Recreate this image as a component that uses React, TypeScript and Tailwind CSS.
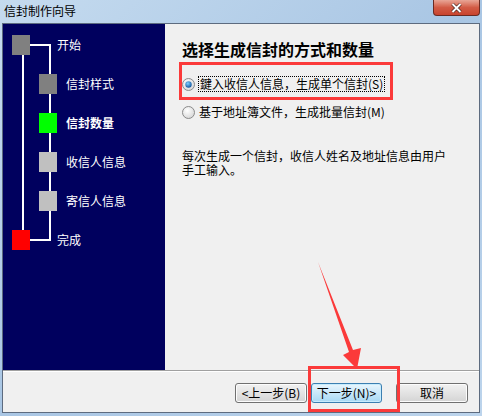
import React from "react";

const font = "font-['Noto_Sans_CJK_SC','Noto_Sans',sans-serif]";

type Step = { label: string; color: string; indent: boolean; bold?: boolean };

const steps: Step[] = [
  { label: "开始", color: "bg-[#808080]", indent: false },
  { label: "信封样式", color: "bg-[#808080]", indent: true },
  { label: "信封数量", color: "bg-[#00ff00]", indent: true, bold: true },
  { label: "收信人信息", color: "bg-[#c0c0c0]", indent: true },
  { label: "寄信人信息", color: "bg-[#c0c0c0]", indent: true },
  { label: "完成", color: "bg-[#ff0000]", indent: false },
];

function Radio({ checked }: { checked?: boolean }) {
  return (
    <svg width="13" height="13" viewBox="0 0 13 13" className="shrink-0">
      <defs>
        <radialGradient id={checked ? "rg1" : "rg0"} cx="0.4" cy="0.35" r="0.7">
          <stop offset="0" stopColor="#ffffff" />
          <stop offset="1" stopColor="#d6d6d6" />
        </radialGradient>
        <radialGradient id="dot" cx="0.4" cy="0.35" r="0.7">
          <stop offset="0" stopColor="#7ed1ff" />
          <stop offset="1" stopColor="#0d4f9a" />
        </radialGradient>
      </defs>
      <circle cx="6.5" cy="6.5" r="6" fill={`url(#${checked ? "rg1" : "rg0"})`} stroke="#8a8a8a" />
      {checked && <circle cx="6.5" cy="6.5" r="3.2" fill="url(#dot)" />}
    </svg>
  );
}

function Button({ children, primary }: { children: React.ReactNode; primary?: boolean }) {
  return (
    <button
      className={`w-full h-[20px] rounded-[3px] border text-[12px] leading-none flex items-center justify-center text-black ${
        primary
          ? "border-[#3c7fb1] bg-gradient-to-b from-[#eaf6fd] to-[#a7d9f5] shadow-[inset_0_0_0_1px_#c8ecfd]"
          : "border-[#707070] bg-gradient-to-b from-[#f2f2f2] to-[#d4d4d4] shadow-[inset_0_0_0_1px_#fcfcfc]"
      }`}
    >
      {children}
    </button>
  );
}

export default function App() {
  return (
    <div className={`relative w-[482px] h-[416px] overflow-hidden flex flex-col bg-gradient-to-br from-[#c5dbef] via-[#a9c6e4] to-[#bcd4ec] ${font}`}>
      {/* title bar */}
      <div className="h-[23px] flex items-start justify-between shrink-0">
        <span className="pl-[4px] pt-[3px] text-[12px] leading-[16px] text-black">信封制作向导</span>
        <div className="mr-[2px] w-[47px] h-[16px] rounded-b-[4px] border border-t-0 border-[#6b2a22] bg-gradient-to-b from-[#e8a596] via-[#d25b45] to-[#c8432e] flex items-center justify-center">
          <svg width="11" height="10" viewBox="0 0 11 10">
            <path d="M1.5 1 L9.5 9 M9.5 1 L1.5 9" stroke="#3b1a14" strokeWidth="3.2" />
            <path d="M1.5 1 L9.5 9 M9.5 1 L1.5 9" stroke="#ffffff" strokeWidth="2" />
          </svg>
        </div>
      </div>

      {/* client area */}
      <div className="flex-1 mx-[2px] mb-[3px] border border-[#5d6b7f] bg-[#f0f0f0] flex flex-col">
        <div className="flex h-[346px] shrink-0">
          {/* step panel */}
          <div className="relative w-[162px] bg-[#00005e] pt-[11px]">
            <svg className="absolute inset-0" width="162" height="346">
              <rect x="27" y="20" width="21" height="2" fill="#fff" />
              <rect x="46" y="20" width="2" height="197" fill="#fff" />
              <rect x="27" y="215" width="21" height="2" fill="#fff" />
              <rect x="19" y="30" width="2" height="180" fill="#fff" />
            </svg>
            {steps.map((s) => (
              <div key={s.label} className={`relative h-[39px] flex items-start ${s.indent ? "pl-[36px]" : "pl-[9px]"}`}>
                <div className={`w-[18px] h-[20px] ${s.color}`} />
                <span
                  className={`text-[12px] leading-[20px] text-white ${s.indent ? "ml-[9px]" : "ml-[27px]"} ${
                    s.bold ? "font-bold" : ""
                  }`}
                >
                  {s.label}
                </span>
              </div>
            ))}
          </div>

          {/* content */}
          <div className="flex-1 pl-[17px] pt-[15px] text-black">
            <div className="text-[16px] leading-[20px] font-bold">选择生成信封的方式和数量</div>
            <div className="mt-[17px] flex items-center gap-[3px] h-[16px]">
              <Radio checked />
              <span className="text-[12px] leading-[14px] border border-dotted border-black px-[1px]">
                鍵入收信人信息，生成单个信封(S)
              </span>
            </div>
            <div className="mt-[12px] flex items-center gap-[4px] h-[16px]">
              <Radio />
              <span className="text-[12px] leading-[14px]">基于地址簿文件，生成批量信封(M)</span>
            </div>
            <p className="mt-[29px] text-[12px] leading-[14px]">
              每次生成一个信封，收信人姓名及地址信息由用户
              <br />
              手工输入。
            </p>
          </div>
        </div>

        {/* button bar */}
        <div className="flex-1 border-t border-[#a0a0a0] shadow-[inset_0_1px_0_#ffffff] flex items-start justify-end pt-[12px] pr-[11px]">
          <div className="w-[72px]">
            <Button>&lt;上一步(B)</Button>
          </div>
          <div className="w-[71px] ml-[4px]">
            <Button primary>下一步(N)&gt;</Button>
          </div>
          <div className="w-[72px] ml-[14px]">
            <Button>取消</Button>
          </div>
        </div>
      </div>

      {/* annotations */}
      <div className="absolute left-[179px] top-[62px] w-[214px] h-[38px] border-[3px] border-[#fb3a3a]" />
      <div className="absolute left-[308px] top-[366px] w-[92px] h-[46px] border-[3px] border-[#fb3a3a]" />
      <svg className="absolute left-0 top-0 pointer-events-none" width="482" height="416">
        <polygon points="318,262 353,350 361,348 357,369 343,355 349,352" fill="#fb3a3a" />
      </svg>
    </div>
  );
}
